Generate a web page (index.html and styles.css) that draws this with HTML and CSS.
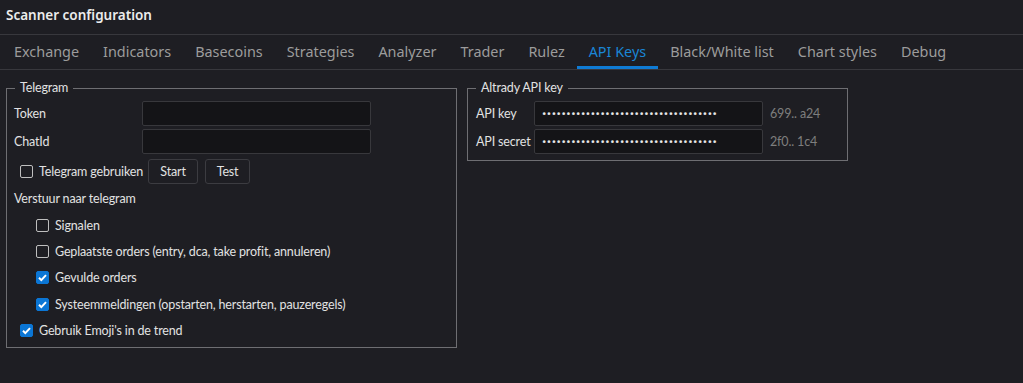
FILE: index.html
```html
<!DOCTYPE html>
<html lang="nl">
<head>
  <meta charset="UTF-8" />
  <title>Scanner configuration</title>
  <link rel="stylesheet" href="styles.css">
</head>
<body>
  <div class="title-bar">Scanner configuration</div>
  <div class="tabs">
    <div class="tab">Exchange</div>
    <div class="tab">Indicators</div>
    <div class="tab">Basecoins</div>
    <div class="tab">Strategies</div>
    <div class="tab">Analyzer</div>
    <div class="tab">Trader</div>
    <div class="tab">Rulez</div>
    <div class="tab active">API Keys</div>
    <div class="tab">Black/White list</div>
    <div class="tab">Chart styles</div>
    <div class="tab">Debug</div>
  </div>
  <div class="content">
    <fieldset class="group telegram">
      <legend>Telegram</legend>
      <div class="field-row">
        <label class="field-label">Token</label>
        <input class="text-input" type="text" />
      </div>
      <div class="field-row">
        <label class="field-label">ChatId</label>
        <input class="text-input" type="text" />
      </div>
      <div class="check-row buttons">
        <label class="check"><span class="box"></span>Telegram gebruiken</label>
        <button class="btn start">Start</button>
        <button class="btn test">Test</button>
      </div>
      <div class="section-label">Verstuur naar telegram</div>
      <div class="check-row indent">
        <label class="check"><span class="box"></span>Signalen</label>
      </div>
      <div class="check-row indent">
        <label class="check"><span class="box"></span>Geplaatste orders (entry, dca, take profit, annuleren)</label>
      </div>
      <div class="check-row indent">
        <label class="check"><span class="box checked"><svg viewBox="0 0 13 13"><path d="M3 6.8l2.3 2.3 4.7-5" /></svg></span>Gevulde orders</label>
      </div>
      <div class="check-row indent">
        <label class="check"><span class="box checked"><svg viewBox="0 0 13 13"><path d="M3 6.8l2.3 2.3 4.7-5" /></svg></span>Systeemmeldingen (opstarten, herstarten, pauzeregels)</label>
      </div>
      <div class="check-row">
        <label class="check"><span class="box checked"><svg viewBox="0 0 13 13"><path d="M3 6.8l2.3 2.3 4.7-5" /></svg></span>Gebruik Emoji's in de trend</label>
      </div>
    </fieldset>
    <fieldset class="group altrady">
      <legend>Altrady API key</legend>
      <div class="field-row">
        <label class="field-label short">API key</label>
        <input class="text-input secret" type="password" value="000000000000000000000000000000000000" />
        <span class="hint">699.. a24</span>
      </div>
      <div class="field-row">
        <label class="field-label short">API secret</label>
        <input class="text-input secret" type="password" value="000000000000000000000000000000000000" />
        <span class="hint">2f0.. 1c4</span>
      </div>
    </fieldset>
  </div>
</body>
</html>
```
FILE: styles.css
```css
body {
  background-color: #1e1e23;
  color: #e2e2e2;
  font-family: Lato, "Noto Sans", sans-serif;
  font-size: 12.5px;
  letter-spacing: -0.15px;
  margin: 0;
}
.title-bar {
  height: 34px;
  line-height: 30px;
  padding-left: 6px;
  font-family: "Noto Sans", sans-serif;
  font-size: 13.5px;
  font-weight: 600;
  letter-spacing: 0;
  color: #ececec;
  border-bottom: 1px solid #38383d;
}
.tabs {
  display: flex;
  height: 34px;
  padding-left: 2px;
  border-bottom: 1px solid #38383d;
}
.tab {
  padding: 0 12px;
  line-height: 33px;
  font-family: "Noto Sans", sans-serif;
  font-size: 14.4px;
  letter-spacing: 0;
  color: #9c9c9c;
  border-bottom: 3px solid transparent;
}
.tab.active {
  color: #1a86d6;
  border-bottom-color: #0f7bd4;
}
.content {
  display: flex;
  align-items: flex-start;
  gap: 10px;
  padding: 9px 0 0 6px;
}
.group {
  margin: 0;
  border: 1px solid #6e6e72;
  padding: 4px 7px 4px 7px;
  box-sizing: border-box;
}
.group legend {
  padding: 0 5px;
  margin-left: 1px;
  color: #e2e2e2;
  line-height: 18px;
}
.telegram {
  width: 451px;
}
.altrady {
  width: 381px;
  padding-bottom: 3px;
}
.field-row {
  display: flex;
  align-items: center;
  height: 25px;
  margin-bottom: 3px;
  white-space: nowrap;
}
.field-label {
  width: 128px;
  flex-shrink: 0;
}
.field-label.short {
  width: 58px;
  padding-left: 1px;
}
.text-input {
  width: 229px;
  height: 25px;
  flex-shrink: 0;
  box-sizing: border-box;
  background-color: #141417;
  border: 1px solid #38383c;
  border-radius: 2px;
  color: #e8e8e8;
  padding: 0 7px;
  font-family: inherit;
  font-size: 13px;
  outline: none;
}
.text-input.secret {
  font-family: "Noto Sans", sans-serif;
  font-size: 11.5px;
  letter-spacing: 0.55px;
}
.hint {
  margin-left: 7px;
  color: #7e7e7e;
}
.check-row {
  display: flex;
  align-items: center;
  height: 26.3px;
  padding-left: 6px;
}
.check-row.buttons {
  height: 29px;
}
.check-row.indent {
  padding-left: 22px;
}
.check {
  display: flex;
  align-items: center;
}
.box {
  width: 13px;
  height: 13px;
  box-sizing: border-box;
  border: 1px solid #bfbfbf;
  border-radius: 2px;
  margin-right: 6px;
  display: flex;
}
.box.checked {
  background-color: #0b76d5;
  border-color: #0b76d5;
}
.box svg {
  width: 13px;
  height: 13px;
  margin: -1px;
  fill: none;
  stroke: #fff;
  stroke-width: 2;
}
.btn {
  height: 25px;
  padding: 0;
  margin-left: 5px;
  background-color: #1e1e23;
  color: #e2e2e2;
  border: 1px solid #3c3c41;
  border-radius: 3px;
  font-family: inherit;
  font-size: 12.5px;
  letter-spacing: -0.15px;
}
.btn.start {
  width: 50px;
}
.btn.test {
  width: 45px;
  margin-left: 7px;
}
.section-label {
  height: 26px;
  line-height: 26px;
}
```
